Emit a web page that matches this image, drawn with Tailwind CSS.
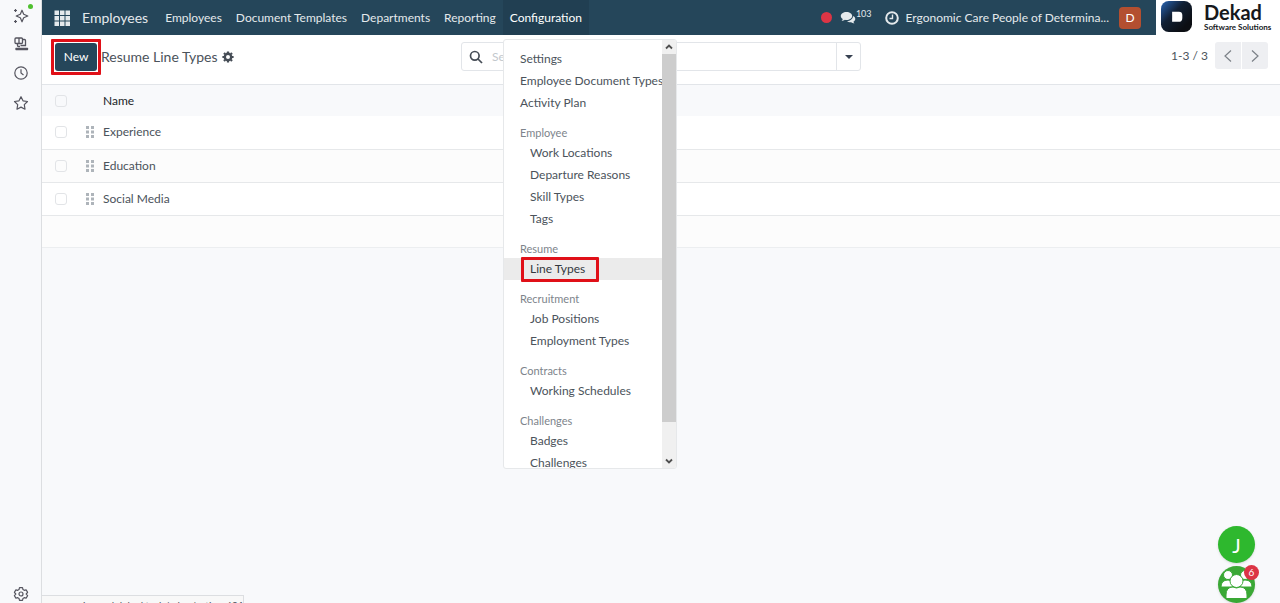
<!DOCTYPE html>
<html lang="en">
<head>
  <meta charset="UTF-8" />
  <meta name="viewport" content="width=device-width, initial-scale=1" />
  <title>Resume Line Types</title>
  <script src="https://cdn.jsdelivr.net/npm/@tailwindcss/browser@4"></script>
</head>
<body class="flex h-screen overflow-hidden bg-[#f8f9fb] font-['Lato',sans-serif] text-xs text-[#4b535b]">

  <!-- browser side strip -->
  <aside class="flex w-[41px] shrink-0 flex-col items-center text-[#55555f]">
    <button aria-label="Assistant" class="relative mt-2 h-4 w-4">
      <svg viewBox="0 0 16 16" class="h-4 w-4" fill="none" stroke="currentColor" stroke-width="1.2" stroke-linejoin="round"><path d="M9 2.2 10.7 6.300 14.800 8 10.700 9.700 9 13.800 7.300 9.700 3.200 8 7.300 6.300Z"/><path d="M2.500 1v3M1 2.500h3M2.500 12v3M1 13.500h3"/></svg>
      <span class="absolute -top-1 -right-1 h-[5px] w-[5px] rounded-full bg-[#4fc02f]"></span>
    </button>
    <button aria-label="Devices" class="mt-3 h-4 w-4">
      <svg viewBox="0 0 16 16" class="h-4 w-4" fill="none" stroke="currentColor" stroke-width="1.300" stroke-linejoin="round"><rect x="2" y="2" width="7.500" height="5.500" rx="1"/><path d="M6 2v5.500M9.500 3.500h2q1 0 1 1V10M4.500 7.500V9.500q0 1 1 1h1.500M7.500 9.500h5.500"/><path d="M3 12.500h11.500v1H3z"/></svg>
    </button>
    <button aria-label="History" class="mt-[13px] h-4 w-4">
      <svg viewBox="0 0 16 16" class="h-4 w-4" fill="none" stroke="currentColor" stroke-width="1.200"><circle cx="8" cy="8" r="6.200"/><path d="M8 4.200V8l2.500 2"/></svg>
    </button>
    <button aria-label="Favorites" class="mt-[14px] h-4 w-4">
      <svg viewBox="0 0 16 16" class="h-4 w-4" fill="none" stroke="currentColor" stroke-width="1.200" stroke-linejoin="round"><path d="M8 1.700 10 5.800l4.500.700-3.200 3.200.700 4.500L8 12.100l-4 2.100.700-4.500L1.500 6.500 6 5.800Z"/></svg>
    </button>
    <button aria-label="Settings" class="mt-auto mb-px h-4 w-4">
      <svg viewBox="0 0 16 16" class="h-4 w-4" fill="none" stroke="currentColor" stroke-width="1.200" stroke-linejoin="round"><path d="M6.500 1.700h3l.5 1.900 1.200.7 1.900-.5 1.500 2.600L13.200 8l1.400 1.600-1.500 2.600-1.900-.5-1.200.7-.5 1.900h-3L6 12.400l-1.200-.7-1.900.5-1.500-2.600L2.800 8 1.400 6.400l1.500-2.600 1.900.5L6 3.600Z"/><circle cx="8" cy="8" r="2"/></svg>
    </button>
  </aside>

  <main class="relative flex min-w-0 grow flex-col border-l border-[#dcdee1]">

    <!-- navbar -->
    <header class="flex h-[35px] shrink-0 items-center bg-[#25465a] text-[#e4e9ec]">
      <button aria-label="Apps" class="ml-3 h-4 w-4">
        <svg viewBox="0 0 16 16" class="h-4 w-4" fill="currentColor"><path d="M.5.500h4.500v4.500H.5zM6 .5h4.500v4.500H6zM11.500.5H16v4.500h-4.500zM.5 6H5v4.500H.5zM6 6h4.500v4.500H6zM11.500 6H16v4.500h-4.500zM.5 11.500H5V16H.5zM6 11.500h4.500V16H6zM11.500 11.500H16V16h-4.500z"/></svg>
      </button>
      <a href="#" class="ml-3 text-sm">Employees</a>
      <nav class="ml-[10px] flex h-full">
        <a href="#" class="flex items-center px-[7px]">Employees</a>
        <a href="#" class="flex items-center px-[7px]">Document Templates</a>
        <a href="#" class="flex items-center px-[7px]">Departments</a>
        <a href="#" class="flex items-center px-[7px]">Reporting</a>
        <button class="flex items-center bg-[#213f52] px-[7px] text-white">Configuration</button>
      </nav>
      <div class="ml-auto flex items-center">
        <span class="h-[11px] w-[11px] rounded-full bg-[#dc3545]"></span>
        <button class="ml-2 flex items-center" aria-label="Messages, 103 unread">
          <svg viewBox="0 0 16 14" class="h-[14px] w-4" fill="currentColor"><path d="M6.500 1C3.200 1 .8 2.800.8 5c0 1.300.8 2.400 2 3.100-.2.800-.7 1.400-1.200 1.900 1.200 0 2.400-.5 3.300-1.200.5.100 1 .2 1.600.2 3.200 0 5.700-1.800 5.700-4S9.700 1 6.500 1Z"/><path d="M13 5.200c0 2.700-2.800 4.700-6 4.800 1 .9 2.600 1.400 4.200 1.200.9.700 2 1.200 3.300 1.200-.5-.5-.9-1-1.100-1.700 2.400-1.200 2.600-4 .1-5.500Z"/></svg>
          <span class="-mt-2 text-[9px] leading-none">103</span>
        </button>
        <button aria-label="Activities" class="ml-3 h-4 w-4">
          <svg viewBox="0 0 16 16" class="h-4 w-4" fill="none" stroke="currentColor" stroke-width="2"><circle cx="8" cy="8" r="5.800"/><path d="M8.500 4.500V8.500H5.500" stroke-width="1.400"/></svg>
        </button>
        <button class="ml-[6px] whitespace-nowrap">Ergonomic Care People of Determina...</button>
        <button class="mr-[15px] ml-[10px] h-[22px] w-[22px] rounded-sm bg-[#b34f30] text-white">D</button>
      </div>
      <a href="#" class="flex h-full w-[124px] shrink-0 items-center bg-white pl-[5px] text-[#16181c]">
        <svg viewBox="0 0 32 32" class="mb-[2px] h-[31px] w-[31px] shrink-0"><defs><linearGradient id="logo" x1="0" y1="0" x2=".8" y2=".8"><stop offset="0" stop-color="#2865b5"/><stop offset=".5" stop-color="#112034"/><stop offset="1" stop-color="#0c0e13"/></linearGradient></defs><rect width="32" height="32" rx="8" fill="url(#logo)"/><path d="M11.500 11h7q3.500 0 3.500 3.500v3q0 4-4 4h-6.500Z" fill="#fff"/></svg>
        <span class="ml-3 flex flex-col">
          <span class="text-xl leading-[18px] font-bold">Dekad</span>
          <span class="text-[8px] leading-3 font-bold whitespace-nowrap">Software Solutions</span>
        </span>
      </a>
    </header>

    <!-- control panel -->
    <section class="flex h-[50px] shrink-0 items-start border-b border-[#e2e5e9] bg-white pr-3">
      <div class="flex w-[419px] items-center pt-1 pl-[9px]">
        <div class="rounded-[1px] border-[3px] border-[#e01018] p-px">
          <button class="h-7 w-[42px] rounded-[3px] bg-[#25465a] text-white">New</button>
        </div>
        <h1 class="text-sm">Resume Line Types</h1>
        <button aria-label="Actions" class="ml-1 h-3 w-3">
          <svg viewBox="0 0 12 12" class="h-3 w-3"><g fill="none" stroke="#454c55"><circle cx="6" cy="6" r="3.200" stroke-width="2.400"/><path d="M6 .4v1.600M6 10v1.600M.4 6H2M10 6h1.600M2 2l1.200 1.200M8.800 8.800 10 10M2 10l1.200-1.200M8.800 3.200 10 2" stroke-width="2.200"/></g></svg>
        </button>
      </div>
      <div class="mt-[7px] flex h-[29px] w-[400px] rounded-[3px] border border-[#e2e5e9]">
        <label for="search" class="flex w-7 items-center justify-center">
          <svg viewBox="0 0 14 14" class="h-[14px] w-[14px]" fill="none" stroke="#454c55" stroke-width="1.700"><circle cx="5.800" cy="5.800" r="4.300"/><path d="m9 9 4 4"/></svg>
        </label>
        <input id="search" type="search" placeholder="Search..." class="min-w-0 grow px-[2px] placeholder:text-[#c3c8cd]" />
        <button aria-label="Toggle search panel" class="flex w-6 items-center justify-center border-l border-[#e2e5e9]">
          <svg viewBox="0 0 8 4" class="h-1 w-2" fill="#374151"><path d="M0 0h8L4 4z"/></svg>
        </button>
      </div>
      <div class="mt-[7px] ml-auto flex items-center">
        <span class="mr-[7px]">1-3 / 3</span>
        <button aria-label="Previous" class="mr-px flex h-[27px] w-[26px] items-center justify-center rounded-l-[3px] bg-[#eeeff2]">
          <svg viewBox="0 0 8 12" class="h-3 w-2" fill="none" stroke="#7b8087" stroke-width="1.200"><path d="M7 .5 1 6l6 5.500"/></svg>
        </button>
        <button aria-label="Next" class="flex h-[27px] w-[26px] items-center justify-center rounded-r-[3px] bg-[#eeeff2]">
          <svg viewBox="0 0 8 12" class="h-3 w-2" fill="none" stroke="#7b8087" stroke-width="1.200"><path d="m1 .5 6 5.500-6 5.500"/></svg>
        </button>
      </div>
    </section>

    <!-- list view -->
    <table class="w-full table-fixed border-collapse text-left">
      <colgroup><col class="w-[38px]" /><col class="w-[23px]" /><col /></colgroup>
      <thead>
        <tr class="h-[31px] text-[#212529]">
          <th class="pl-[13px]"><input type="checkbox" aria-label="Select all" class="block h-3 w-3 appearance-none rounded-[3px] border border-[#e2e4e7]" /></th>
          <th></th>
          <th class="font-normal">Name</th>
        </tr>
      </thead>
      <tbody id="rows"></tbody>
    </table>

    <!-- configuration menu -->
    <div class="absolute top-[39px] left-[461px] flex h-[430px] w-[174px] overflow-hidden rounded-[3px] border border-[#e6e8ea] bg-white">
      <div class="w-[158px] shrink-0 pt-2 leading-[22px] whitespace-nowrap">
        <a href="#" class="block pl-4">Settings</a>
        <a href="#" class="block pl-4">Employee Document Types</a>
        <a href="#" class="block pl-4">Activity Plan</a>
        <div id="groups"></div>
      </div>
      <div class="flex grow flex-col bg-[#f0f0f0]">
        <svg viewBox="0 0 14 14" class="h-[14px] w-full" fill="none" stroke="#505050" stroke-width="1.800"><path d="m4 8.500 3-3 3 3"/></svg>
        <div class="h-[368px] bg-[#cdcdcd]"></div>
        <svg viewBox="0 0 14 14" class="mt-auto h-[14px] w-full" fill="none" stroke="#505050" stroke-width="1.800"><path d="m4 5.500 3 3 3-3"/></svg>
      </div>
    </div>

    <!-- link status -->
    <div class="absolute bottom-0 left-0 h-2 w-[202px] overflow-hidden border-t border-r border-[#dcdee1] bg-[#f8f8f8] pl-[2px] text-[10px] leading-[18px] whitespace-nowrap">ergonomic-prod.dekad.tech/odoo/action-601</div>

    <!-- chat bubbles -->
    <div class="absolute right-[25px] bottom-0 flex flex-col gap-[3px]">
      <button class="h-[37px] w-[37px] rounded-full bg-[#2eb82e] text-xl text-white shadow">J</button>
      <button class="relative h-[37px] w-[37px] rounded-full bg-[#3aa835] shadow" aria-label="Group chat">
        <svg viewBox="0 0 37 37" class="h-[37px] w-[37px]" fill="#fff" stroke="#3aa835"><circle cx="10" cy="9" r="4.500"/><circle cx="27" cy="9" r="4.500"/><path d="M3 21q0-7 7-7 5 0 5 7ZM34 21q0-7-7-7-5 0-5 7Z"/><circle cx="18.500" cy="15" r="6.500"/><path d="M8 32.500V29q0-8 7-8 3.500 2 7 0 7 0 7 8v3.500Z"/></svg>
        <span class="absolute -top-px -right-1 h-[15px] w-[15px] rounded-full bg-[#dc3545] text-center text-[10px] leading-[15px] text-white">6</span>
      </button>
    </div>
  </main>

<script>
  const rows = ['Experience', 'Education', 'Social Media'];
  const groups = [
    ['Employee', ['Work Locations', 'Departure Reasons', 'Skill Types', 'Tags']],
    ['Resume', ['Line Types']],
    ['Recruitment', ['Job Positions', 'Employment Types']],
    ['Contracts', ['Working Schedules']],
    ['Challenges', ['Badges', 'Challenges']]
  ];

  document.getElementById('rows').innerHTML = rows.map(name => `
    <tr class="h-[33px] border-b border-[#e6e8ea] bg-white even:bg-[#fcfcfc]">
      <td class="pl-[13px]"><input type="checkbox" aria-label="Select ${name}" class="block h-3 w-3 appearance-none rounded-[3px] border border-[#e2e4e7]" /></td>
      <td><svg viewBox="0 0 8 12" class="ml-[6px] h-3 w-2" fill="#aeb4ba"><path d="M0 0h3v3H0zM5 0h3v3H5zM0 4.500h3v3H0zM5 4.500h3v3H5zM0 9h3v3H0zM5 9h3v3H5z"/></svg></td>
      <td>${name}</td>
    </tr>`).join('') + '<tr class="h-8 border-b border-[#eceef0] bg-[#fcfcfc]"><td colspan="3"></td></tr>';

  document.getElementById('groups').innerHTML = groups.map(([title, items]) => `
    <div class="mt-[9px] pl-4 text-[11px] leading-[19px] text-[#7d848b]">${title}</div>` +
    items.map(item => item === 'Line Types'
      ? `<a href="#" class="relative block bg-[#ebebeb] pl-[26px] text-[#33383e]">${item}<span class="absolute -top-px left-[17px] h-[25px] w-[78px] rounded-[1px] border-[3px] border-[#e01018]"></span></a>`
      : `<a href="#" class="block pl-[26px]">${item}</a>`).join('')).join('');
</script>

</body>
</html>
